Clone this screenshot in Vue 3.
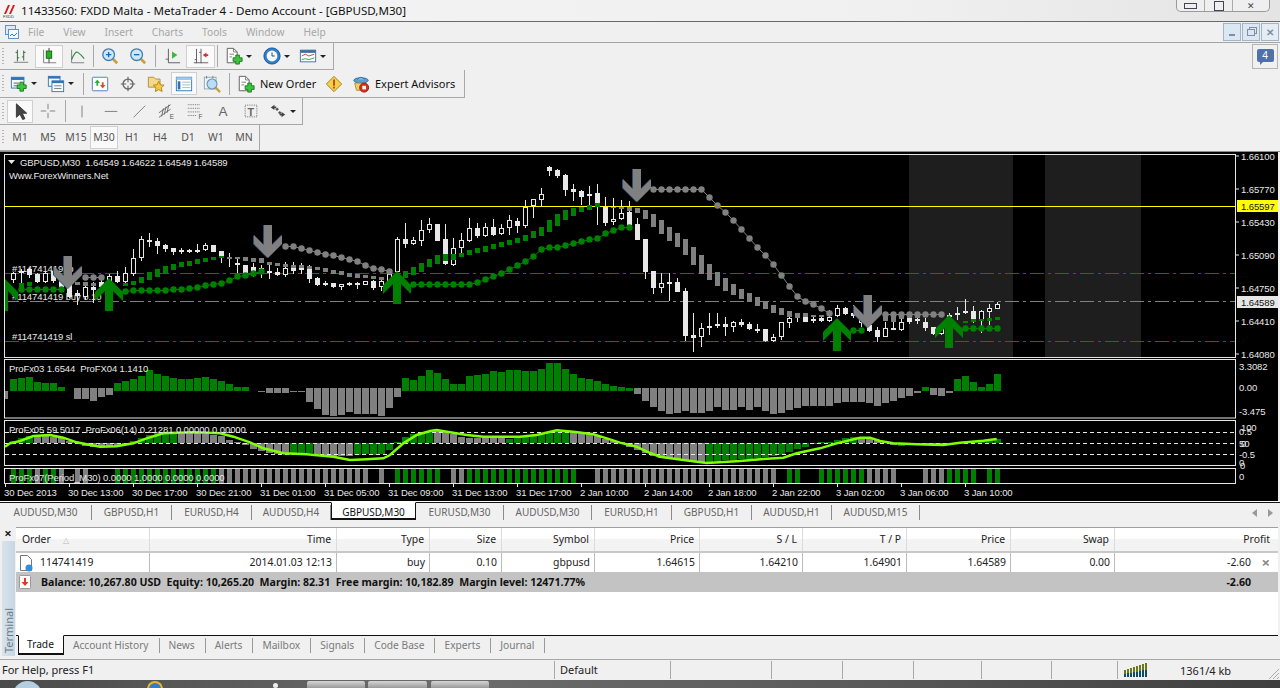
<script setup>
// chart values were read from the screenshot at 3x, so y = offset + v / 3
const main = (v) => Math.round(150 + v / 3);
const sub = (v) => Math.round(355 + v / 3);
const cx = (i) => 13 + 8 * i;

// [body top, body bottom, high, low, filled]
const candles = [
  [370,390,365,398,0],[362,368,358,398,0],[358,375,355,383,1],[372,397,368,400,1],[370,395,366,400,0],
  [362,392,358,400,1],[385,410,375,415,1],[405,440,395,445,1],[430,438,420,465,1],[410,440,405,450,0],
  [410,420,395,458,1],[395,412,385,420,1],[378,395,372,400,0],[378,397,362,400,1],[370,396,352,400,0],
  [325,372,296,378,0],[268,325,258,332,0],[270,274,250,290,1],[272,287,265,312,1],[285,298,282,305,1],
  [295,306,295,315,1],[300,304,295,312,1],[300,304,297,310,1],[300,303,282,310,1],[286,300,280,302,0],
  [285,305,285,305,1],[303,322,303,340,1],[322,326,308,350,1],[338,346,328,370,1],[345,368,345,382,1],
  [350,362,340,380,1],[355,365,345,385,1],[362,366,335,388,1],[366,375,355,378,1],[355,375,335,380,0],
  [352,362,335,372,1],[354,358,340,372,1],[358,386,345,398,1],[385,405,380,407,1],[398,403,392,408,1],
  [400,412,398,415,1],[403,410,403,420,0],[400,406,396,408,0],[400,403,395,418,1],[394,404,394,404,0],
  [393,413,390,420,1],[394,410,390,422,0],[372,395,365,400,0],[268,365,262,368,0],[268,283,218,293,1],
  [270,283,262,285,0],[240,272,210,288,0],[222,240,205,250,0],[222,272,222,272,1],[268,343,222,345,1],
  [295,345,265,347,0],[270,295,250,320,0],[235,272,205,275,0],[235,257,220,265,1],[232,257,218,262,0],
  [232,255,208,258,1],[235,253,222,255,0],[210,235,195,255,0],[213,228,205,250,1],[170,228,150,235,0],
  [148,168,148,205,0],[132,150,113,172,0],[50,63,47,78,1],[60,78,58,83,1],[75,120,72,138,1],
  [117,125,102,152,1],[123,140,120,165,1],[133,138,108,170,1],[128,170,102,225,1],[170,218,140,228,1],
  [208,217,145,225,0],[188,208,150,210,0],[185,225,152,225,1],[222,270,205,270,1],[267,365,267,388,1],
  [364,415,364,433,1],[400,415,370,430,0],[397,401,370,452,1],[396,425,385,426,1],[423,557,415,572,1],
  [556,563,490,607,1],[535,562,520,590,0],[528,533,490,555,1],[523,529,490,535,0],[523,532,500,558,1],
  [515,532,513,545,0],[515,525,508,530,1],[522,538,515,540,1],[537,539,522,550,1],[538,572,538,575,1],
  [560,572,552,575,0],[516,560,516,570,0],[505,518,490,533,0],[498,505,490,515,0],[490,515,488,517,1],
  [507,514,495,518,0],[503,512,495,515,1],[500,512,480,516,0],[475,497,465,500,0],[475,492,470,495,1],
  [490,497,465,505,1],[505,520,495,530,0],[525,543,515,545,1],[540,560,530,575,1],[535,560,515,560,0],
  [533,538,490,540,1],[515,540,505,542,0],[502,515,495,522,1],[508,512,500,522,1],[515,535,505,542,1],
  [532,552,530,555,1],[535,552,530,555,0],[494,500,490,520,0],[490,494,472,510,1],[482,488,448,492,0],
  [482,508,468,520,1],[484,510,480,548,0],[475,485,463,525,0],[463,476,455,478,0],
].map(([t, b, h, l, f], i) => ({ x: cx(i), t: main(t), b: main(b), h: main(h), l: main(l), f }));

// small indicator squares that ride above the dots: [first index, top, bottom, ...]
function run(start, vals, fill) {
  const out = [];
  for (let k = 0; k < vals.length; k += 2) {
    out.push({ x: cx(start + k / 2) - 2, y: main(vals[k]), h: main(vals[k + 1]) - main(vals[k]), fill });
  }
  return out;
}
const GREEN = "#008000";
const GRAY = "#808080";
const squares = [
  ...run(1, [400,412,396,408], GREEN),
  ...run(8, [395,405,397,407,400,408], GRAY),
  ...run(14, [400,408,393,405,380,400,366,390,358,382,348,368,342,360,336,352,333,347,327,342,323,335,320,330,318,323], GREEN),
  ...run(27, [320,326,320,326,322,332,325,335,325,338,335,345,338,347,342,351,345,354,345,354,348,358,350,360,354,366,360,372,364,374,368,380,372,384,375,385,377,388,380,390], GRAY),
  ...run(49, [362,385,352,375,340,365,328,352,315,342,313,333,313,330,310,320,300,315,295,310,288,305,283,298,277,290,270,285,265,278,255,273,243,265,232,258,210,245,193,228,180,210,175,198,170,186,165,180,160,172], GREEN),
  ...run(75, [170,175,170,178,172,184,175,190,180,207,192,232,210,252,232,273,250,290,267,316,292,345,316,372,342,390,366,408,384,423,402,435,417,447,428,456,442,468,452,478,466,489,474,496,484,500,490,504,490,500,495,500,495,500], GRAY),
  ...run(109, [488,512,490,516,490,506,490,504,490,504,490,500,490,500,490,498], GRAY),
  ...run(119, [512,520,508,516,508,514,505,513,502,510], GREEN),
];

function dots(start, vals) {
  return vals.map((v, k) => ({ x: cx(start + k) + 0.5, y: main(v) + 0.5 }));
}
const polyline = (list) => list.map((p) => `${p.x},${p.y}`).join(" ");
const greenRuns = [
  dots(1, [418,418,418,418,418,418]),
  dots(14, [422,419,419,419,419,419,416,416,413,410,406,402,398,390,378,374,368,362]),
  dots(50, [402,402,402,402,402,402,402,402,395,386,377,368,356,344,332,318,296,290,290,284,278,272,268,263,248,239,231,231]),
  dots(105, [540,540]),
  dots(119, [533,533,533,533,533]),
];
const grayRuns = [
  dots(9, [380,380,380]),
  dots(34, [287,287,293,299,305,311,314,320,326,332,344,353,356,362]),
  dots(80, [117,117,117,117,117,117,117,141,165,186,210,237,264,291,315,342,375,408,438,453,462,474,489]),
  dots(109, [493,493,493,493,493,493,493,493]),
];

const upArrow = "0,0 14,14 14,23 4,13 4,33 -4,33 -4,13 -14,23 -14,14";
const downArrow = "0,0 14,-14 14,-23 4,-13 4,-33 -4,-33 -4,-13 -14,-23 -14,-14";
const ups = [[4,278],[109,278],[397,271],[837,318],[949,315]];
const downs = [[68,289],[268,258],[637,202],[868,328]];

// upper histogram: positive is a green top, negative a gray bottom
const hist = [
  72,68,66,80,84,84,96,0,-133,-133,-137,-125,-120,83,78,72,63,45,57,63,68,72,72,68,66,72,78,87,96,96,
  -108,-112,-115,-115,-115,-112,-112,-140,-162,-180,-183,-180,-172,-178,-178,-178,-183,-160,-125,69,75,63,45,54,72,87,87,63,60,57,
  48,51,45,45,48,48,42,24,24,42,57,69,72,78,87,93,96,99,-117,-138,
  -156,-168,-177,-174,-168,-174,-174,-168,-156,-165,-165,-156,-165,-156,-168,-177,-174,-165,-159,-153,-153,-153,-153,-144,-141,-141,-141,-144,-153,-144,
  -138,-130,-123,-114,96,-120,-122,-114,72,63,81,96,87,57,
];
const histBars = hist.map((v, i) => {
  if (!v) return null;
  const top = v > 0 ? sub(v) : sub(v > -115 ? 108 : 98);
  const bottom = v > 0 ? sub(107) : sub(-v);
  return { x: cx(i) - 3, y: top, h: bottom - top, fill: v > 0 ? GREEN : GRAY };
}).filter(Boolean);

// oscillator histogram, bar end in zoom units, negative means gray
const osc = [
  258,248,242,-240,-243,-245,-250,-258,-262,-272,-275,-277,-275,-272,-268,258,248,240,234,233,232,-232,-233,-235,-237,-240,-244,-255,-262,-270,
  -282,-288,-293,-296,-297,297,293,295,-298,-300,-302,-303,-302,300,298,300,297,285,262,246,237,232,228,-225,-232,-238,-245,-248,-249,-250,
  -250,-250,252,250,247,243,238,234,231,230,-232,-234,-237,-243,-253,-258,-262,-275,-285,-293,
  -302,-310,-312,-315,-318,-320,-322,320,318,315,314,313,313,310,305,303,300,290,282,275,268,262,260,255,250,247,-248,-251,-256,-261,
  -270,272,268,268,-268,-271,-270,271,267,262,258,256,254,252,
];
const oscBars = osc.map((v, i) => {
  const end = Math.abs(v);
  const top = sub(Math.min(end, 265));
  const bottom = sub(Math.max(end, 265));
  return { x: cx(i) - 3, y: top, h: Math.max(bottom - top, 1), fill: v > 0 ? GREEN : GRAY };
});

const limePts = [
  ...[[15,275],[30,265],[60,258],[100,243],[150,240],[190,248],[230,262],[260,268],[300,275],[350,274],[400,265],[440,250],[490,235],[580,232],[660,235],[700,245],[750,262],[790,280],[850,295],[920,298],[1000,305],[1050,315],[1100,313],[1150,310],[1170,300],[1210,265],[1250,240],[1290,228]].map(([x, y]) => [x / 3, 355 + y / 3]),
  ...[[20,225],[60,232],[110,240],[160,245],[270,245],[320,240],[380,226],[430,230],[490,238],[530,250],[570,263],[620,275],[650,290],[690,305],[760,315],[830,324],[930,318],[1000,312],[1060,308],[1100,295],[1170,280],[1220,265],[1290,248]].map(([x, y]) => [430 + x / 3, 355 + y / 3]),
  ...[[60,248],[90,258],[130,265],[200,268],[280,270],[330,263],[400,257],[440,252]].map(([x, y]) => [850 + x / 3, 355 + y / 3]),
].map((p) => p.join(",")).join(" ");

// bottom pane as [first, last, colour] runs
const signalRuns = [
  [0,2,GREEN],[3,3,GRAY],[4,5,GREEN],[6,6,GRAY],[8,9,GRAY],[13,25,GREEN],[26,44,GRAY],[46,46,GRAY],[48,53,GREEN],
  [55,56,GRAY],[57,70,GREEN],[73,95,GRAY],[97,98,GREEN],[101,106,GREEN],[107,110,GRAY],[114,116,GRAY],[117,120,GREEN],[122,123,GREEN],
];
const signalBars = signalRuns.flatMap(([a, b, fill]) => {
  const out = [];
  for (let i = a; i <= b; i++) out.push({ x: cx(i) - 2, fill });
  return out;
});

const headLine = "GBPUSD,M30  1.64549 1.64622 1.64549 1.64589";
const fx1 = "ProFx03 1.6544  ProFX04 1.1410";
const fx2 = "ProFx05 59.5017  ProFx06(14) 0.21281 0.00000 0.00000";
const timeLabels = ["30 Dec 2013","30 Dec 13:00","30 Dec 17:00","30 Dec 21:00","31 Dec 01:00","31 Dec 05:00","31 Dec 09:00","31 Dec 13:00","31 Dec 17:00","2 Jan 10:00","2 Jan 14:00","2 Jan 18:00","2 Jan 22:00","3 Jan 02:00","3 Jan 06:00","3 Jan 10:00"];
const priceLabels = [["1.66100",156],["1.65770",189],["1.65430",222],["1.65090",255],["1.64750",288],["1.64410",321],["1.64080",354]];

const icons = {
  bars: '<path d="M6 3v13M4 6h2M6 12h2M13 4v11M11 11h2M13 6h2" stroke="#2c5f2c" fill="none"/><path d="M2 17h16" stroke="#777"/>',
  candle: '<path d="M10 1v17" stroke="#333"/><rect x="7" y="4.500" width="6" height="8" fill="#22b422" stroke="#1a5a1a"/><path d="M4 3v14.500h14" stroke="#777" fill="none"/>',
  line: '<path d="M4 3v14.500h14" stroke="#777" fill="none"/><path d="M4 14Q8 4 11 6T18 13" stroke="#2a8a3a" stroke-width="1.200" fill="none"/>',
  zoomin: '<path d="M13 13l5 5" stroke="#c9a13a" stroke-width="3"/><circle cx="8.500" cy="8.500" r="6.500" fill="#cfe6f7" stroke="#3b7fbd" stroke-width="1.500"/><path d="M5.500 8.500h6M8.500 5.500v6" stroke="#2467a8" stroke-width="1.500"/>',
  zoomout: '<path d="M13 13l5 5" stroke="#c9a13a" stroke-width="3"/><circle cx="8.500" cy="8.500" r="6.500" fill="#cfe6f7" stroke="#3b7fbd" stroke-width="1.500"/><path d="M5.500 8.500h6" stroke="#2467a8" stroke-width="1.500"/>',
  shift: '<path d="M6 2v15.500h13M3 13.500h3" stroke="#555" fill="none"/><path d="M10 5v8l6-4z" fill="#3db83d"/>',
  scroll: '<path d="M5 2v16M10 2v16M2 17.500h16M3 14h2M8 6h2" stroke="#555" fill="none"/><path d="M12 9l4-3v2h2v2h-2v2z" fill="#c33"/>',
  doc: '<path d="M2.500 1.500h7l4 4v12h-11z" fill="#fff" stroke="#555"/><path d="M9.500 1.500v4h4M5 8h5M5 11h3" stroke="#777" fill="none"/><path d="M12 9h4v3h3v4h-3v3h-4v-3H9v-4h3z" fill="#3ec43e" stroke="#1b7a1b"/>',
  clock: '<circle cx="10" cy="10" r="9" fill="#2f7fd0" stroke="#1b4f8f"/><circle cx="10" cy="10" r="6" fill="#f4f8fc"/><path d="M10 6v4h3" stroke="#333" fill="none"/>',
  tmpl: '<rect x="1.500" y="3.500" width="17" height="13" fill="#fff" stroke="#3a6ea5"/><rect x="1.500" y="3.500" width="17" height="3" fill="#3a6ea5"/><path d="M3 10l4-2 4 2 6-2" stroke="#d03030" fill="none"/><path d="M3 14l4-1 4 1 6-2" stroke="#30a030" fill="none"/>',
  newchart: '<rect x="1.500" y="2.500" width="14" height="12" fill="#f4f9fe" stroke="#2f74b5"/><rect x="1.500" y="2.500" width="14" height="3" fill="#2f74b5"/><path d="M4 9h6M4 12h4" stroke="#555"/><path d="M11 8h4v3h3v4h-3v3h-4v-3H8v-4h3z" fill="#3ec43e" stroke="#1b7a1b"/>',
  profiles: '<rect x="1.500" y="1.500" width="13" height="11" fill="#f4f9fe" stroke="#2f74b5"/><rect x="1.500" y="1.500" width="13" height="2.500" fill="#2f74b5"/><rect x="5.500" y="6.500" width="13" height="12" fill="#f4f9fe" stroke="#2f74b5"/><rect x="5.500" y="6.500" width="13" height="2.500" fill="#2f74b5"/><path d="M8 12h8M8 15h8" stroke="#777"/>',
  mw: '<rect x="1.500" y="2.500" width="17" height="15" rx="1" fill="#fff" stroke="#3a7ebf"/><path d="M7 5l3 4H8v3H6V9H4z" fill="#2fae2f"/><path d="M13 15l-3-4h2V8h2v3h2z" fill="#d94a2a"/>',
  target: '<circle cx="10" cy="10" r="5.500" fill="none" stroke="#666" stroke-width="1.500"/><path d="M10 2v6M10 12v6M2 10h6M12 10h6" stroke="#666" stroke-width="1.200"/>',
  folder: '<path d="M1.500 5.500v-3h6l2 2h5v9h-13z" fill="#f5d98a" stroke="#a98a3a"/><path d="M13 7l1.800 3.800 4.200.500-3 2.900.800 4.200-3.800-2.100-3.800 2.100.800-4.200-3-2.900 4.200-.500z" fill="#f3c93f" stroke="#a9851f"/>',
  term: '<rect x="1.500" y="2.500" width="17" height="15" fill="#fff" stroke="#2f74b5"/><rect x="1.500" y="2.500" width="17" height="3" fill="#9cc6ea"/><rect x="3" y="7" width="3" height="9" fill="#2f74b5"/><path d="M8 8h9M8 11h9M8 14h9" stroke="#9bb"/>',
  tester: '<rect x="1.500" y="2.500" width="13" height="13" fill="#eef3f8" stroke="#8aa"/><path d="M4 1v3M11 1v3" stroke="#778"/><path d="M14 14l5 5" stroke="#c9a13a" stroke-width="2.500"/><circle cx="10" cy="10" r="5.500" fill="#bcdcf5" stroke="#6a93b5" stroke-width="1.200"/>',
  warn: '<path d="M10 1.500l8.500 8.500-8.500 8.500L1.500 10z" fill="#f5cf45" stroke="#9a7a20"/><rect x="9" y="5" width="2" height="7" fill="#b5481c"/><rect x="9" y="13" width="2" height="2" fill="#b5481c"/>',
  ea: '<ellipse cx="10" cy="6" rx="8" ry="3" fill="#5a9fd8" stroke="#2f6ea5"/><path d="M6 5q4-5 8 0" fill="#7ebbe8" stroke="#2f6ea5"/><path d="M3 9h12v8H5z" fill="#f2cf6a" stroke="#b08a2a"/><circle cx="13.500" cy="14" r="5" fill="#d6301f" stroke="#8a1a10"/><rect x="11.500" y="12" width="4" height="4" fill="#fff"/>',
  cursor: '<path d="M6 2v15l4-3.500 3 6 2.500-1-3-6h5z" fill="#444" stroke="#333"/>',
  cross: '<path d="M10 2v6M10 12v6M2 10h6M12 10h6" stroke="#777"/>',
  vline: '<path d="M10 4v13" stroke="#777"/>',
  hline: '<path d="M3 10.500h14" stroke="#777"/>',
  tline: '<path d="M4 17L17 4" stroke="#777"/>',
  chan: '<path d="M1 12L14 3M1 17L14 8M4 16l2-9M7 14l2-9M10 12l2-9" stroke="#666" fill="none"/><text x="13" y="19" font-size="7" fill="#555" font-family="Liberation Sans, sans-serif">E</text>',
  fibo: '<path d="M2 3h14M2 7h14M2 11h14M2 15h10" stroke="#666" stroke-dasharray="1 1" fill="none"/><text x="14" y="19" font-size="7" fill="#555" font-family="Liberation Sans, sans-serif">F</text>',
  atext: '<text x="5" y="16" font-size="15" fill="#666" font-family="Liberation Sans, sans-serif">A</text>',
  ttext: '<rect x="3.500" y="3.500" width="13" height="13" fill="none" stroke="#666" stroke-dasharray="1 1"/><text x="6" y="15" font-size="12" font-weight="bold" fill="#666" font-family="Liberation Sans, sans-serif">T</text>',
  arrows: '<path d="M2 6l4-3v2h2v2H6v2zM18 14l-4-3v2h-2v2h2v2z" fill="#444"/><path d="M9 6l2 2-2 2-2-2zM12 10l2 2-2 2-2-2z" fill="#555"/>',
};

const toolbars = [
  [
    { i: "bars", w: 28 }, { i: "candle", w: 28, on: true }, { i: "line", w: 28 }, { sep: true, w: 5 },
    { i: "zoomin", w: 28 }, { i: "zoomout", w: 28 }, { sep: true, w: 6 },
    { i: "shift", w: 28 }, { i: "scroll", w: 29, on: true }, { sep: true, w: 4 },
    { i: "doc", w: 38, drop: true }, { i: "clock", w: 38, drop: true }, { i: "tmpl", w: 34, drop: true },
  ],
  [
    { i: "newchart", w: 32, drop: true }, { i: "profiles", w: 42, drop: true }, { sep: true, w: 4 },
    { i: "mw", w: 30 }, { i: "target", w: 26 }, { i: "folder", w: 30 }, { i: "term", w: 26, on: true }, { i: "tester", w: 30 }, { sep: true, w: 4 },
    { i: "doc", w: 91, text: "New Order" }, { i: "warn", w: 24 }, { i: "ea", w: 114, text: "Expert Advisors" },
  ],
  [
    { i: "cursor", w: 26, on: true }, { i: "cross", w: 30 }, { sep: true, w: 4 },
    { i: "vline", w: 30 }, { i: "hline", w: 28 }, { i: "tline", w: 28 }, { i: "chan", w: 28 }, { i: "fibo", w: 28 }, { i: "atext", w: 28 }, { i: "ttext", w: 28 },
    { i: "arrows", w: 35, drop: true },
  ],
];
const periods = ["M1", "M5", "M15", "M30", "H1", "H4", "D1", "W1", "MN"];

const menu = ["File", "View", "Insert", "Charts", "Tools", "Window", "Help"];
const chartTabs = [
  { t: "AUDUSD,M30", w: 92 }, { t: "GBPUSD,H1", w: 80 }, { t: "EURUSD,H4", w: 80 }, { t: "AUDUSD,H4", w: 79 },
  { t: "GBPUSD,M30", w: 85, on: true }, { t: "EURUSD,M30", w: 88 }, { t: "AUDUSD,M30", w: 88 }, { t: "EURUSD,H1", w: 80 },
  { t: "GBPUSD,H1", w: 80 }, { t: "AUDUSD,H1", w: 80 }, { t: "AUDUSD,M15", w: 88 },
];
const columns = [
  { t: "Order", w: 134, left: true }, { t: "Time", w: 187, v: "2014.01.03 12:13" }, { t: "Type", w: 93, v: "buy" }, { t: "Size", w: 72, v: "0.10" },
  { t: "Symbol", w: 93, v: "gbpusd" }, { t: "Price", w: 105, v: "1.64615" }, { t: "S / L", w: 103, v: "1.64210" }, { t: "T / P", w: 104, v: "1.64901" },
  { t: "Price", w: 104, v: "1.64589" }, { t: "Swap", w: 104, v: "0.00" }, { t: "Profit", w: 163, v: "-2.60" },
];
const termTabs = ["Account History", "News", "Alerts", "Mailbox", "Signals", "Code Base", "Experts", "Journal"];
const statusCells = [{ w: 555, t: "For Help, press F1" }, { w: 116, t: "Default" }, { w: 101 }, { w: 71 }, { w: 71 }, { w: 68 }, { w: 70 }, { w: 66 }];
const netBars = [7, 8, 9, 10, 11, 12, 13, 14];
</script>

<template>
  <div class="app">
    <header class="title">
      <svg class="logo" viewBox="0 0 14 14">
        <path d="M2 10L6 1h2L4 10zM7 10l4-9h2L9 10z" fill="#c8201a" />
        <text x="1" y="14" font-size="4" fill="#333" font-family="Liberation Sans, sans-serif">FXDD</text>
      </svg>
      <span class="title-text">11433560: FXDD Malta - MetaTrader 4 - Demo Account - [GBPUSD,M30]</span>
      <div class="win-btns">
        <span><i class="w-min"></i></span>
        <span><i class="w-max"></i></span>
        <span class="last">✕</span>
      </div>
    </header>

    <nav class="menu">
      <svg class="menu-icon" viewBox="0 0 14 14">
        <rect x="0.500" y="0.500" width="10" height="9" fill="#dceaf8" stroke="#5b94cc" />
        <rect x="3.500" y="4.500" width="10" height="9" fill="#f4f9fe" stroke="#5b94cc" />
        <path d="M5 11l2-2 2 2 3-3" stroke="#3a7ebf" fill="none" />
      </svg>
      <span v-for="m in menu" :key="m">{{ m }}</span>
      <div class="mdi">
        <span><i class="m-min"></i></span>
        <span><i class="m-res"></i></span>
        <span class="x">✕</span>
      </div>
    </nav>

    <section class="tools">
      <div class="bars">
        <div v-for="(bar, n) in toolbars" :key="n" class="bar" :class="'bar' + n">
          <i class="grip"></i>
          <template v-for="(it, k) in bar" :key="k">
            <span v-if="it.sep" class="sep-cell" :style="{ width: it.w + 'px' }"><i></i></span>
            <span v-else class="cell" :class="{ on: it.on, wide: it.text }" :style="{ width: it.w + 'px' }">
              <svg class="ico" viewBox="0 0 20 20" v-html="icons[it.i]"></svg>
              <b v-if="it.drop" class="caret"></b>
              <em v-if="it.text">{{ it.text }}</em>
            </span>
          </template>
        </div>
        <div class="bar bar3">
          <i class="grip"></i>
          <span v-for="p in periods" :key="p" class="period" :class="{ on: p === 'M30' }">{{ p }}</span>
        </div>
      </div>
      <div class="msg">
        <div class="bubble">4</div>
      </div>
    </section>

    <div class="chart">
      <svg class="plot" viewBox="0 152 1278 349" width="1278" height="349">
        <defs>
          <clipPath id="mainClip"><rect x="5" y="155" width="1230" height="202" /></clipPath>
        </defs>

        <rect x="909" y="155" width="104" height="202" fill="#1e1e1e" />
        <rect x="1045" y="155" width="96" height="202" fill="#1e1e1e" />

        <rect x="4.500" y="154.500" width="1231" height="203" class="frame" />
        <rect x="4.500" y="359.500" width="1231" height="58.500" class="frame" />
        <rect x="4.500" y="420.500" width="1231" height="45" class="frame" />
        <rect x="4.500" y="468.500" width="1231" height="15" class="frame" />

        <line x1="5" x2="1235" y1="273.500" y2="273.500" stroke="#e01010" stroke-dasharray="14 4 3 4" />
        <line x1="5" x2="1235" y1="301.500" y2="301.500" stroke="#808080" stroke-dasharray="14 4 3 4" />
        <line x1="5" x2="1235" y1="341.500" y2="341.500" stroke="#e01010" stroke-dasharray="14 4 3 4" />
        <line x1="5" x2="1235" y1="206.500" y2="206.500" stroke="#ffff00" />

        <text x="12" y="272" class="t">#114741419 tp</text>
        <text x="12" y="300" class="t">#114741419 buy 0.10</text>
        <text x="12" y="340" class="t">#114741419 sl</text>

        <g v-for="c in candles" :key="c.x">
          <line :x1="c.x + 0.500" :x2="c.x + 0.500" :y1="c.h" :y2="c.l" stroke="#e8e8e8" />
          <rect :x="c.x - 1.500" :y="c.t + 0.500" width="4" :height="Math.max(c.b - c.t - 1, 1)" :fill="c.f ? '#e8e8e8' : '#000'" stroke="#e8e8e8" stroke-width="1" />
        </g>

        <rect v-for="(s, k) in squares" :key="'s' + k" :x="s.x" :y="s.y" width="5" :height="s.h" :fill="s.fill" />

        <g v-for="(r, k) in grayRuns" :key="'gr' + k">
          <polyline :points="polyline(r)" stroke="#808080" fill="none" />
          <circle v-for="p in r" :key="p.x" :cx="p.x" :cy="p.y" r="3.200" fill="#808080" />
        </g>
        <g v-for="(r, k) in greenRuns" :key="'gn' + k">
          <polyline :points="polyline(r)" stroke="#008000" fill="none" />
          <circle v-for="p in r" :key="p.x" :cx="p.x" :cy="p.y" r="3.200" fill="#008000" />
        </g>

        <g clip-path="url(#mainClip)">
          <polygon v-for="a in ups" :key="a[0]" :points="upArrow" :transform="`translate(${a[0]} ${a[1]})`" fill="#008000" />
          <g v-for="a in downs" :key="a[0]" :transform="`translate(${a[0]} ${a[1]})`">
            <polygon :points="downArrow" transform="translate(-1 0)" fill="#2c4a78" />
            <polygon :points="downArrow" fill="#808080" />
          </g>
        </g>

        <path d="M8 160h7l-3.500 4z" fill="#e8e8e8" />
        <text x="20" y="166" class="t">{{ headLine }}</text>
        <text x="9" y="179" class="t">Www.ForexWinners.Net</text>

        <!-- right scale -->
        <g v-for="p in priceLabels" :key="p[0]">
          <line x1="1236" x2="1239" :y1="p[1]" :y2="p[1]" stroke="#e8e8e8" />
          <text x="1241" :y="p[1] + 3.500" class="t">{{ p[0] }}</text>
        </g>
        <rect x="1237" y="200" width="41" height="12" fill="#ffff00" />
        <text x="1241" y="210" class="t dark">1.65597</text>
        <rect x="1237" y="296" width="41" height="12" fill="#e6e6e6" />
        <text x="1241" y="306" class="t dark">1.64589</text>

        <!-- ProFx03 / 04 -->
        <rect x="5" :y="sub(108)" width="3" height="8" fill="#808080" />
        <rect v-for="(b, k) in histBars" :key="'h' + k" :x="b.x" :y="b.y" width="7" :height="b.h" :fill="b.fill" />
        <text x="9" y="372" class="t">{{ fx1 }}</text>
        <text x="1239" y="370" class="t">3.3082</text>
        <text x="1239" y="391" class="t">0.00</text>
        <text x="1239" y="415" class="t">-3.475</text>

        <!-- ProFx05 / 06 -->
        <rect v-for="(b, k) in oscBars" :key="'o' + k" :x="b.x" :y="b.y" width="7" :height="b.h" :fill="b.fill" />
        <line v-for="y in [432.500, 443.500, 454.500, 465.500]" :key="y" x1="5" x2="1235" :y1="y" :y2="y" stroke="#e8e8e8" stroke-dasharray="4 3" />
        <polyline :points="limePts" fill="none" stroke="#7fff00" stroke-width="2.500" />
        <text x="9" y="433" class="t">{{ fx2 }}</text>
        <text x="1241" y="431" class="t">100</text>
        <text x="1239" y="435" class="t">0.5</text>
        <text x="1239" y="447" class="t">50</text>
        <text x="1241" y="447" class="t">0</text>
        <text x="1239" y="458" class="t">-0.5</text>
        <text x="1239" y="466" class="t">0</text>
        <text x="1240" y="469" class="t">0</text>

        <!-- ProFx07 -->
        <rect v-for="b in signalBars" :key="b.x" :x="b.x" y="469" width="5" height="14" :fill="b.fill" />
        <text x="9" y="481" class="t">ProFx07(Period_M30) 0.0000 1.0000 0.0000 0.0000</text>
        <text x="1239" y="480" class="t">0</text>

        <!-- time scale -->
        <g v-for="(l, k) in timeLabels" :key="l">
          <line :x1="5.500 + 64 * k" :x2="5.500 + 64 * k" y1="484" y2="487" stroke="#e8e8e8" />
          <text :x="4 + 64 * k" y="496" class="t">{{ l }}</text>
        </g>
      </svg>
    </div>

    <div class="chart-tabs">
      <span v-for="(t, k) in chartTabs" :key="k" class="ctab" :class="{ on: t.on }" :style="{ width: t.w + 'px' }">{{ t.t }}</span>
      <div class="scroll-arrows"><i class="al"></i><i class="ar"></i></div>
    </div>

    <section class="terminal">
      <aside class="strip">
        <span class="close">×</span>
        <div class="strip-body"><span>Terminal</span></div>
      </aside>
      <div class="term-main">
        <div class="table">
          <div class="row head">
            <div v-for="(c, k) in columns" :key="k" class="col" :class="{ left: c.left, profit: c.t === 'Profit' }" :style="{ width: c.w + 'px' }">
              {{ c.t }}<span v-if="c.left" class="sort">△</span>
            </div>
          </div>
          <div class="row body">
            <div v-for="(c, k) in columns" :key="k" class="col" :class="{ left: c.left, pl: c.t === 'Profit' }" :style="{ width: c.w + 'px' }">
              <template v-if="c.left">
                <svg class="order-ico" viewBox="0 0 14 18">
                  <path d="M1.500 1.500h7l4 4v11h-11z" fill="#fff" stroke="#777" />
                  <circle cx="10" cy="14" r="3.500" fill="#2f8fd8" />
                </svg>
                114741419
              </template>
              <template v-else>{{ c.v }}</template>
              <span v-if="c.t === 'Profit'" class="row-x">×</span>
            </div>
          </div>
          <div class="row total">
            <svg class="bal-ico" viewBox="0 0 12 14">
              <rect x="0.500" y="0.500" width="11" height="13" rx="1" fill="#fff" stroke="#999" />
              <path d="M6 11L2.500 7H5V3h2v4h2.500z" fill="#d8401c" />
            </svg>
            <span>Balance: 10,267.80 USD&nbsp; Equity: 10,265.20&nbsp; Margin: 82.31&nbsp; Free margin: 10,182.89&nbsp; Margin level: 12471.77%</span>
            <span class="total-pl">-2.60</span>
          </div>
          <div class="blank"></div>
        </div>
        <div class="term-tabs">
          <span class="ttab on">Trade</span>
          <span v-for="t in termTabs" :key="t" class="ttab">{{ t }}</span>
        </div>
      </div>
    </section>

    <footer class="status">
      <span v-for="(c, k) in statusCells" :key="k" class="scell" :style="{ width: c.w + 'px' }">{{ c.t }}</span>
      <span class="net">
        <i v-for="n in netBars" :key="n" :style="{ height: n + 'px' }"></i>
      </span>
      <span class="kb">1361/4 kb</span>
      <svg class="sgrip" viewBox="0 0 14 14"><path d="M13 3L3 13M13 7l-6 6M13 11l-2 2" stroke="#aaa" /></svg>
    </footer>

    <div class="taskbar">
      <i class="orb"></i>
      <i class="ie"></i>
      <i class="tray-dot"></i>
      <i class="task t1"></i>
      <i class="task t2"></i>
      <i class="task t3"></i>
    </div>
  </div>
</template>

<style>
html, body { margin: 0; padding: 0; background: #f0f0f0; overflow: hidden; }
</style>

<style scoped>
.app {
  width: 1280px;
  height: 688px;
  overflow: hidden;
  display: flex;
  flex-direction: column;
  background: #f0f0f0;
  font-family: "Noto Sans", "Liberation Sans", sans-serif;
  font-size: 11px;
  color: #222;
}

.title {
  height: 21px;
  flex: none;
  display: flex;
  align-items: center;
  background: linear-gradient(90deg, #f4f4f4, #f0f0f0 70%, #e4e4e4);
  border-bottom: 1px solid #6a6a6a;
  position: relative;
}
.logo { width: 14px; height: 14px; margin-left: 2px; }
.title-text { margin-left: 5px; font-size: 11.6px; color: #111; }
.win-btns {
  margin-left: auto;
  margin-right: 10px;
  align-self: flex-start;
  height: 11px;
  display: flex;
  border: 1px solid #9a9a9a;
  border-top: 0;
  border-radius: 0 0 5px 5px;
  background: #efefef;
}
.win-btns span {
  width: 27px;
  display: flex;
  align-items: center;
  justify-content: center;
  border-right: 1px solid #aaa;
  font-size: 9px;
  color: #445;
  overflow: hidden;
}
.win-btns .last { border-right: 0; width: 36px; }
.w-min { width: 11px; height: 4px; border: 1px solid #445; }
.w-max { width: 8px; height: 8px; border: 1px solid #445; outline: 0; }

.menu {
  height: 20px;
  flex: none;
  display: flex;
  align-items: center;
  gap: 19px;
  padding-left: 5px;
  border-bottom: 1px solid #a5a5a5;
  font-size: 10.2px;
  color: #a6a6a6;
}
.menu-icon { width: 14px; height: 14px; margin-right: -10px; }
.mdi { margin-left: auto; display: flex; gap: 1px; margin-right: 1px; }
.mdi span {
  width: 16px;
  height: 16px;
  border: 1px solid #a3b4c4;
  background: #dbe8f4;
  display: flex;
  align-items: center;
  justify-content: center;
  color: #7f90a0;
  font-size: 10px;
  font-weight: bold;
}
.mdi .x { background: #e4ecf4; }
.m-min { width: 6px; height: 2px; background: #7f90a0; margin-top: 5px; }
.m-res { width: 6px; height: 5px; border: 1px solid #7f90a0; box-shadow: 2px -2px 0 -1px #dbe8f4, 2px -2px 0 0 #7f90a0; }

.tools { display: flex; justify-content: space-between; flex: none; height: 108px; }
.bars { display: flex; flex-direction: column; }
.bar {
  display: flex;
  align-items: center;
  width: fit-content;
  padding-left: 7px;
  padding-right: 4px;
  position: relative;
  border-right: 1px solid #a8a8a8;
  border-bottom: 1px solid #a8a8a8;
  box-sizing: border-box;
}
.bar0 { height: 27px; }
.bar1 { height: 28px; }
.bar2 { height: 27px; padding-right: 2px; }
.bar3 { height: 26px; padding-left: 6px; padding-right: 1px; }
.grip {
  position: absolute;
  left: 2px;
  top: 5px;
  bottom: 5px;
  width: 2px;
  background: repeating-linear-gradient(#b5b5b5 0 1px, transparent 1px 3px);
}
.cell {
  height: 23px;
  display: flex;
  align-items: center;
  justify-content: center;
  gap: 2px;
  box-sizing: border-box;
}
.cell.on {
  background: #fafafa;
  outline: 1px solid #cfcfcf;
  outline-offset: -1px;
}
.cell.wide { justify-content: flex-start; padding-left: 6px; gap: 5px; }
.cell em { font-style: normal; font-size: 11px; color: #111; white-space: nowrap; }
.ico { width: 18px; height: 18px; flex: none; }
.caret { width: 0; height: 0; border: 3px solid transparent; border-top: 3px solid #222; border-bottom: 0; flex: none; margin-left: 1px; }
.sep-cell { height: 22px; display: flex; justify-content: center; }
.sep-cell i { width: 1px; background: #a8a8a8; }
.period {
  width: 28px;
  height: 23px;
  line-height: 23px;
  text-align: center;
  font-size: 10.5px;
  color: #555;
  box-sizing: border-box;
}
.period.on { background: #fafafa; outline: 1px solid #cfcfcf; outline-offset: -1px; }

.msg {
  box-sizing: border-box;
  width: 26px;
  height: 25px;
  margin: 1px 2px 0 0;
  border: 1px solid #b5b5b5;
  display: flex;
  justify-content: center;
  padding-top: 4px;
}
.bubble {
  width: 17px;
  height: 13px;
  line-height: 13px;
  text-align: center;
  background: #4f71a8;
  color: #fff;
  font-size: 10px;
  border-radius: 2px;
  position: relative;
}
.bubble::after {
  content: "";
  position: absolute;
  left: 3px;
  bottom: -3px;
  border: 2px solid #4f71a8;
  border-right-color: transparent;
  border-bottom-color: transparent;
}

.chart {
  flex: none;
  border-top: 1px solid #8a8a8a;
  height: 349px;
}
.plot { display: block; background: #000; }
.frame { fill: none; stroke: #e6e6e6; }
.t {
  font-family: "Liberation Sans", sans-serif;
  font-size: 9.5px;
  letter-spacing: -0.1px;
  fill: #e8e8e8;
  white-space: pre;
}
.t.dark { fill: #111; }

.chart-tabs {
  flex: none;
  height: 20px;
  margin-top: 1px;
  box-sizing: border-box;
  border-top: 1px solid #111;
  box-shadow: 0 -1px 0 #fff;
  display: flex;
  align-items: flex-start;
  position: relative;
  font-size: 10px;
  color: #666;
}
.ctab {
  height: 15px;
  line-height: 15px;
  margin-top: 2px;
  border-right: 1px solid #8a8a8a;
  text-align: center;
  flex: none;
  box-sizing: border-box;
}
.ctab.on {
  height: 18px;
  margin-top: -1px;
  line-height: 18px;
  background: #fff;
  color: #111;
  border: 1px solid #111;
  border-top: 1px solid #fff;
  border-bottom-width: 2px;
}
.scroll-arrows { margin-left: auto; display: flex; gap: 11px; margin-right: 7px; margin-top: 6px; }
.al { width: 0; height: 0; border: 4px solid transparent; border-right: 5px solid #999; border-left: 0; }
.ar { width: 0; height: 0; border: 4px solid transparent; border-left: 5px solid #999; border-right: 0; }

.terminal { flex: none; height: 137px; display: flex; font-size: 10.4px; }
.strip { width: 16px; flex: none; display: flex; flex-direction: column; }
.close { height: 19px; line-height: 22px; text-align: center; font-size: 13px; font-weight: bold; color: #222; }
.strip-body {
  flex: 1;
  margin: 0 1px 3px 2px;
  background: linear-gradient(90deg, #d8e4ec, #c6d6e2);
  display: flex;
  align-items: flex-end;
  justify-content: center;
}
.strip-body span {
  writing-mode: vertical-rl;
  transform: rotate(180deg);
  font-size: 11px;
  color: #6a7a88;
  padding-top: 3px;
  line-height: 11px;
}
.term-main { flex: 1; display: flex; flex-direction: column; padding-top: 5px; margin-right: 2px; min-width: 0; }
.table { flex: none; height: 107px; background: #fff; border-top: 1px solid #a0a0a0; display: flex; flex-direction: column; }
.row { display: flex; flex: none; }
.head {
  height: 23px;
  background: linear-gradient(#fff 50%, #f3f3f3 50%);
  border-bottom: 2px solid #c8c8c8;
}
.col {
  box-sizing: border-box;
  flex: none;
  text-align: right;
  padding-right: 5px;
  border-right: 1px solid #dcdcdc;
  line-height: 23px;
  white-space: nowrap;
  color: #222;
}
.col:last-child { border-right: 0; }
.col.left { text-align: left; padding-left: 6px; }
.col.profit { padding-right: 8px; }
.sort { color: #bbb; margin-left: 12px; font-size: 8px; }
.body { height: 19px; }
.body .col { line-height: 19px; border-right-color: #bcbcbc; padding-right: 4px; position: relative; }
.body .col.left { display: flex; align-items: center; gap: 7px; padding-left: 3px; }
.body .col.pl { padding-right: 27px; }
.row-x { position: absolute; right: 8px; top: 0; color: #8a8a8a; font-size: 15px; font-weight: bold; }
.order-ico { width: 14px; height: 18px; }
.total {
  height: 20px;
  background: #c3c3c3;
  align-items: center;
  color: #111;
  font-weight: bold;
  font-size: 10.6px;
}
.bal-ico { width: 12px; height: 14px; margin: 0 10px 0 3px; flex: none; }
.total-pl { margin-left: auto; margin-right: 27px; }
.blank { flex: 1; }
.term-tabs {
  flex: none;
  height: 22px;
  box-sizing: border-box;
  display: flex;
  align-items: flex-start;
  padding-left: 2px;
  border-top: 1px solid #111;
  color: #7a7a7a;
  font-size: 10.2px;
}
.ttab {
  padding: 0 10px 0 9px;
  height: 15px;
  line-height: 15px;
  margin-top: 2px;
  border-right: 1px solid #999;
  white-space: nowrap;
}
.ttab.on {
  padding: 0 9px 0 8px;
  line-height: 17px;
  margin-top: -1px;
  color: #111;
  background: #fff;
  border: 1px solid #111;
  border-top: 1px solid #fff;
  border-bottom-width: 2px;
  height: 17px;
}

.status {
  flex: none;
  height: 21px;
  display: flex;
  align-items: center;
  box-sizing: border-box;
  border-top: 1px solid #a8a8a8;
  color: #222;
  position: relative;
}
.scell {
  flex: none;
  box-sizing: border-box;
  height: 18px;
  line-height: 18px;
  padding-left: 2px;
  border-right: 1px solid #a8a8a8;
  white-space: nowrap;
}
.scell:nth-child(2) { padding-left: 5px; }
.net { display: flex; align-items: flex-end; gap: 1px; margin-left: 6px; height: 14px; width: 24px; }
.net i { width: 2px; background: linear-gradient(#6a7a1a 50%, #0e4a6a 50%); }
.kb { margin-left: 32px; }
.sgrip { position: absolute; right: 0; bottom: 0; width: 14px; height: 14px; }

.taskbar {
  flex: none;
  height: 8px;
  position: relative;
  overflow: hidden;
  background: linear-gradient(90deg, #4a4a4a, #6c6c6c 35%, #585858 70%, #3e3e3e);
}
.taskbar i { position: absolute; display: block; }
.orb { left: 13px; top: 1px; width: 29px; height: 29px; border-radius: 50%; background: #b6cfe0; }
.ie { left: 147px; top: 1px; width: 16px; height: 16px; border-radius: 50%; border: 2px solid #e8b820; box-sizing: border-box; background: #3a78c8; }
.tray-dot { left: 273px; top: 3px; width: 5px; height: 5px; border-radius: 50%; background: #eee; }
.task { top: 1px; height: 8px; border-radius: 2px 2px 0 0; background: linear-gradient(#d6d6d6, #909090); }
.t1 { left: 307px; width: 58px; }
.t2 { left: 368px; width: 59px; }
.t3 { left: 431px; width: 58px; }
</style>
